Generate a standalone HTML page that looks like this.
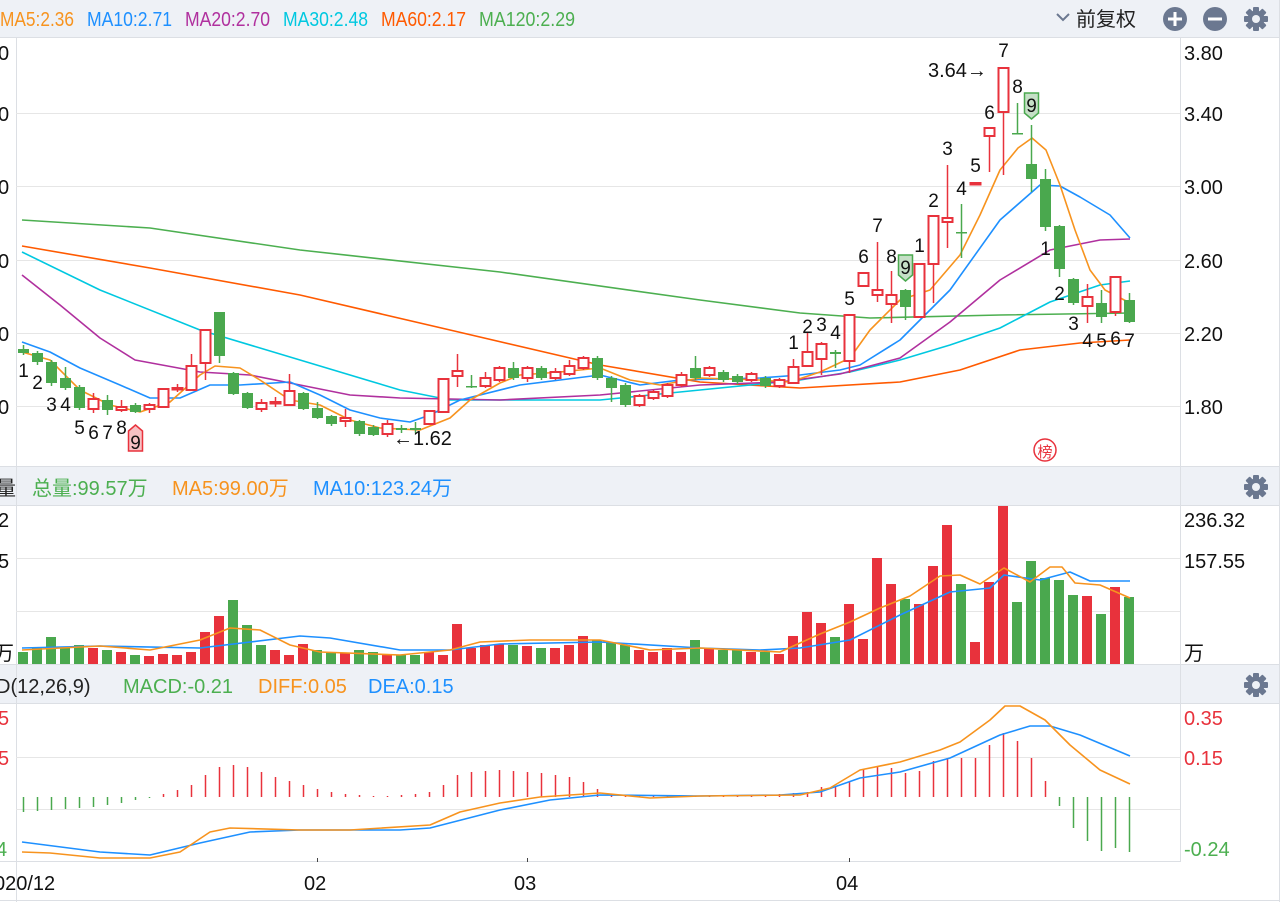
<!DOCTYPE html>
<html><head><meta charset="utf-8">
<style>
html,body{margin:0;padding:0;background:#fff;width:1286px;height:902px;overflow:hidden}
svg{display:block}
text{font-family:"Liberation Sans","Noto Sans CJK SC",sans-serif}
</style></head>
<body>
<svg id="s" width="1286" height="902" viewBox="0 0 1286 902" xmlns="http://www.w3.org/2000/svg">
<rect x="0" y="0" width="1286" height="902" fill="#fff"/>
<line x1="1279.5" y1="0" x2="1279.5" y2="902" stroke="#dcdfe4"/>
<rect x="0" y="0" width="1279" height="37" fill="#eef1f6"/>
<line x1="0" y1="37.5" x2="1279" y2="37.5" stroke="#dcdfe4"/>
<rect x="0" y="467" width="1279" height="38" fill="#eef1f6"/>
<line x1="0" y1="466.5" x2="1279" y2="466.5" stroke="#dcdfe4"/>
<line x1="0" y1="505.5" x2="1279" y2="505.5" stroke="#dcdfe4"/>
<rect x="0" y="665" width="1279" height="38" fill="#eef1f6"/>
<line x1="0" y1="664.5" x2="1279" y2="664.5" stroke="#dcdfe4"/>
<line x1="0" y1="703.5" x2="1279" y2="703.5" stroke="#dcdfe4"/>
<line x1="0" y1="861.5" x2="1180" y2="861.5" stroke="#dcdfe4"/>
<line x1="0" y1="900.5" x2="1279" y2="900.5" stroke="#dcdfe4"/>
<line x1="16.5" y1="38" x2="16.5" y2="902" stroke="#dcdfe4"/>
<line x1="1180.5" y1="38" x2="1180.5" y2="862" stroke="#dcdfe4"/>
<g id="grid" stroke="#e6e6e6" stroke-width="1">
<line x1="16" y1="113.5" x2="1180" y2="113.5"/><line x1="16" y1="186.5" x2="1180" y2="186.5"/>
<line x1="16" y1="260.5" x2="1180" y2="260.5"/><line x1="16" y1="333.5" x2="1180" y2="333.5"/>
<line x1="16" y1="406.5" x2="1180" y2="406.5"/>
<line x1="16" y1="558.5" x2="1180" y2="558.5"/><line x1="16" y1="611.5" x2="1180" y2="611.5"/>
<line x1="16" y1="757.5" x2="1180" y2="757.5"/><line x1="16" y1="809.5" x2="1180" y2="809.5"/>
</g>
<g font-size="20">
<text x="0" y="26" fill="#f7931e" textLength="74" lengthAdjust="spacingAndGlyphs">MA5:2.36</text>
<text x="87" y="26" fill="#1e90ff" textLength="85" lengthAdjust="spacingAndGlyphs">MA10:2.71</text>
<text x="185" y="26" fill="#b0309e" textLength="85" lengthAdjust="spacingAndGlyphs">MA20:2.70</text>
<text x="283" y="26" fill="#00c8e0" textLength="85" lengthAdjust="spacingAndGlyphs">MA30:2.48</text>
<text x="381" y="26" fill="#ff5a00" textLength="85" lengthAdjust="spacingAndGlyphs">MA60:2.17</text>
<text x="479" y="26" fill="#4caf50" textLength="96" lengthAdjust="spacingAndGlyphs">MA120:2.29</text>
<text x="1076" y="26" fill="#222">前复权</text>
<path d="M1057 14 l6 6 l6 -6" fill="none" stroke="#6b7890" stroke-width="2"/>
<text x="-4" y="495" fill="#222">量</text>
<text x="32" y="495" fill="#4caf50">总量:99.57万</text>
<text x="172" y="495" fill="#f7931e">MA5:99.00万</text>
<text x="313" y="495" fill="#1e90ff">MA10:123.24万</text>
<text x="-4" y="693" fill="#222">D(12,26,9)</text>
<text x="123" y="693" fill="#4caf50">MACD:-0.21</text>
<text x="258" y="693" fill="#f7931e">DIFF:0.05</text>
<text x="368" y="693" fill="#1e90ff">DEA:0.15</text>
<g fill="#111">
<text x="1184" y="60">3.80</text><text x="1184" y="121">3.40</text><text x="1184" y="194">3.00</text>
<text x="1184" y="268">2.60</text><text x="1184" y="341">2.20</text><text x="1184" y="414">1.80</text>
<text x="1184" y="527">236.32</text><text x="1184" y="568">157.55</text><text x="1184" y="660">万</text>
<text x="-2" y="60">0</text><text x="-2" y="121">0</text><text x="-2" y="194">0</text>
<text x="-2" y="268">0</text><text x="-2" y="341">0</text><text x="-2" y="414">0</text>
<text x="-2" y="527">2</text><text x="-2" y="568">5</text><text x="-6" y="660">万</text>
<text x="-6" y="890">020/12</text><text x="304" y="890">02</text><text x="514" y="890">03</text><text x="836" y="890">04</text>
</g>
<text x="1184" y="725" fill="#e8323c">0.35</text><text x="1184" y="765" fill="#e8323c">0.15</text>
<text x="1184" y="856" fill="#4caf50">-0.24</text>
<text x="-2" y="725" fill="#e8323c">5</text><text x="-2" y="765" fill="#e8323c">5</text><text x="-4" y="856" fill="#4caf50">4</text>
</g>
<g stroke="#444"><line x1="317.5" y1="858" x2="317.5" y2="862"/><line x1="527.5" y1="858" x2="527.5" y2="862"/><line x1="849.5" y1="858" x2="849.5" y2="862"/></g>
<circle cx="1175" cy="19" r="12" fill="#6b7890"/><path d="M1168 19h14M1175 12v14" stroke="#fff" stroke-width="3"/>
<circle cx="1215" cy="19" r="12" fill="#6b7890"/><path d="M1208 19h14" stroke="#fff" stroke-width="3"/>
<g id="gear"><g transform="translate(1256,19)" fill="#6b7890">
<circle r="8.5"/>
<g><rect x="-3" y="-12" width="6" height="24" rx="1"/><rect x="-3" y="-12" width="6" height="24" rx="1" transform="rotate(45)"/><rect x="-3" y="-12" width="6" height="24" rx="1" transform="rotate(90)"/><rect x="-3" y="-12" width="6" height="24" rx="1" transform="rotate(135)"/></g>
<circle r="4" fill="#eef1f6"/></g></g>
<use href="#gear" y="468"/><use href="#gear" y="666"/>
<g id="dyn"></g>
<circle cx="1045" cy="450" r="11" fill="none" stroke="#e8323c" stroke-width="1.5"/>
<text x="1045" y="457" font-size="15" fill="#e8323c" text-anchor="middle">榜</text>
</svg>
<script>
var NS="http://www.w3.org/2000/svg",g=document.getElementById('dyn');
function el(t,a,txt){var e=document.createElementNS(NS,t);for(var k in a)e.setAttribute(k,a[k]);if(txt!=null)e.textContent=txt;g.appendChild(e);return e;}
function X(i){return 23+14*i;}
var R="#e8323c",G="#4aa84e";
var vol=[[652,0],[648,0],[637,0],[648,0],[645,0],[648,1],[650,0],[652,1],[655,0],[656,1],[654,1],[655,1],[652,1],[632,1],[616,1],[600,0],[625,0],[645,0],[650,1],[655,1],[644,1],[650,0],[653,0],[653,1],[650,0],[652,0],[655,1],[655,0],[655,0],[652,1],[655,1],[624,1],[648,1],[645,1],[644,1],[645,0],[646,1],[648,0],[648,1],[645,1],[636,1],[640,0],[643,0],[645,0],[650,1],[652,1],[648,1],[652,1],[640,0],[648,1],[650,0],[650,0],[652,1],[652,0],[654,1],[636,1],[612,1],[623,1],[637,0],[604,1],[639,1],[558,1],[584,1],[599,0],[604,1],[566,1],[525,1],[584,0],[642,1],[582,1],[506,1],[602,0],[561,0],[578,0],[580,0],[595,0],[596,1],[614,0],[587,1],[597,0]];
vol.forEach(function(v,i){el('rect',{x:X(i)-5,y:v[0],width:10,height:664-v[0],fill:v[1]?R:G});});
function pl(pts,c,w){el('polyline',{points:pts,fill:'none',stroke:c,'stroke-width':w||1.6,'stroke-linejoin':'round'});}
pl("22,648 100,646 200,648 300,636 330,638 400,650 450,650 500,644 600,642 700,648 760,650 800,648 850,640 900,615 950,592 990,588 1004,575 1040,580 1070,572 1090,581 1130,581","#1e90ff");
pl("22,650 100,646 150,650 200,640 230,628 260,630 290,645 320,652 400,655 450,650 480,642 530,640 600,640 650,650 700,648 780,652 820,634 850,622 880,608 910,596 940,576 960,575 980,584 1004,568 1030,582 1050,567 1062,567 1075,583 1100,585 1130,598","#f7931e");
var mh=[15,14,13,12,11,10,8,6,3,1,-3,-7,-12,-22,-30,-32,-30,-25,-20,-16,-12,-8,-5,-3,-2,-1,-1,-2,-3,-5,-12,-22,-25,-26,-27,-26,-25,-24,-22,-20,-15,-8,-3,-2,-1,-1,-1,-1,-1,-1,-1,-1,-1,-1,-3,-4,-5,-10,-10,-15,-28,-31,-29,-24,-26,-36,-39,-39,-39,-52,-64,-56,-39,-16,9,31,44,54,51,55];
mh.forEach(function(v,i){el('line',{x1:X(i)+.5,x2:X(i)+.5,y1:797,y2:797+v,stroke:v>0?G:R,'stroke-width':1.5});});
pl("22,842 100,852 150,855 200,843 250,832 300,830 400,830 430,828 500,810 550,800 600,795 700,796 780,795 820,792 860,778 900,772 950,758 1000,735 1030,726 1050,726 1080,735 1130,756","#1e90ff");
pl("22,852 50,853 100,858 150,858 180,852 210,832 230,828 300,830 350,830 430,825 460,812 500,803 540,797 600,793 650,798 700,796 800,795 830,788 860,770 900,762 940,750 960,742 990,720 1005,706 1020,706 1045,720 1070,745 1100,770 1130,784","#f7931e");
pl("22,220 150,228 300,250 500,272 700,300 800,313 870,318 1000,315 1130,313","#4caf50");
pl("22,246 150,268 300,295 450,330 600,365 700,382 800,388 900,382 960,370 1020,350 1080,343 1130,340","#ff5a00");
pl("22,252 100,290 200,330 300,360 400,390 450,400 600,400 700,390 800,380 850,372 900,360 950,345 1000,328 1050,302 1100,285 1130,281","#00c8e0");
pl("22,275 60,305 100,338 135,360 200,372 250,375 300,385 350,395 400,398 500,400 600,395 700,385 780,382 840,374 900,358 950,322 1000,280 1050,250 1100,240 1130,239","#b0309e");
pl("22,342 50,352 80,368 120,385 150,398 180,398 210,385 240,385 290,382 320,395 350,410 380,418 410,422 430,415 460,400 520,385 560,380 600,375 640,385 680,380 760,378 800,375 840,370 860,365 900,340 950,290 1000,220 1040,185 1060,186 1080,197 1110,215 1130,238","#1e90ff");
pl("22,352 50,360 80,390 110,405 140,412 170,402 200,375 215,366 240,368 260,380 290,400 320,405 350,420 380,428 420,430 450,418 470,400 500,383 520,375 560,372 600,368 630,380 660,385 700,378 760,380 790,382 820,372 850,358 870,330 900,300 930,290 960,255 980,215 1000,170 1018,148 1032,138 1046,150 1060,185 1075,230 1090,270 1105,290 1130,303","#f7931e");
var c=[[0,349,353,345,355],[0,353,362,351,365],[0,362,383,360,386],[0,378,388,367,390],[0,387,408,385,410],[1,399,409,393,413],[0,400,410,395,415],[1,407,410,400,412],[0,405,412,403,413],[1,405,409,403,413],[1,389,407,388,408],[1,388,389,384,392],[1,366,390,354,391],[1,330,363,329,380],[0,312,356,312,363],[0,373,394,372,395],[0,393,408,392,409],[1,403,409,399,412],[1,402,403,397,407],[1,391,405,374,406],[0,393,409,392,410],[0,408,418,402,419],[0,416,424,415,426],[1,418,421,409,427],[0,421,434,420,436],[0,427,435,425,436],[1,424,434,420,437],[0,428,430,425,433],[0,428,430,422,433],[1,411,424,410,425],[1,379,412,378,413],[1,371,376,354,387],[0,386,387,375,388],[1,378,386,372,388],[1,368,380,366,382],[0,368,378,362,380],[1,368,378,366,382],[0,368,378,366,380],[1,372,378,368,380],[1,366,374,360,376],[1,358,368,356,370],[0,358,378,356,380],[0,378,388,376,402],[0,385,405,383,407],[1,396,405,394,407],[1,392,398,390,400],[1,385,396,383,398],[1,375,385,372,387],[0,368,378,356,380],[1,368,375,366,377],[0,372,380,370,382],[0,376,382,374,384],[1,374,380,372,382],[0,378,386,376,388],[1,380,386,378,388],[1,367,383,359,384],[1,352,366,332,367],[1,344,359,342,375],[0,352,354,350,368],[1,315,361,315,373],[1,273,286,273,287],[1,290,295,242,302],[1,295,304,271,323],[0,290,307,289,320],[1,264,317,264,318],[1,216,264,215,303],[1,218,222,165,248],[0,232,233,204,258],[1,183,184,183,184],[1,128,136,128,172],[1,68,112,67,175],[0,133,134,103,134],[0,164,179,125,192],[0,179,227,169,231],[0,226,269,225,277],[0,279,303,278,305],[1,297,306,284,323],[0,303,317,290,323],[1,277,312,276,316],[0,300,322,293,323]];
c.forEach(function(d,i){var x=X(i),col=d[0]?R:G;
 el('line',{x1:x+.5,x2:x+.5,y1:d[3],y2:d[4],stroke:col,'stroke-width':1.5});
 var h=Math.max(d[2]-d[1],1.5);
 if(d[0]){el('rect',{x:x-4.5,y:d[1],width:10,height:h,fill:'#fff',stroke:col,'stroke-width':2});}
 else el('rect',{x:x-5,y:d[1],width:11,height:h,fill:col});});
var L=[[0,"1",377],[1,"2",389],[2,"3",411],[3,"4",411],[4,"5",434],[5,"6",439],[6,"7",439],[7,"8",434],
[55,"1",349],[56,"2",333],[57,"3",331],[58,"4",339],[59,"5",305],[60,"6",263],[61,"7",232],[62,"8",263],[64,"1",252],[65,"2",207],[66,"3",155],[67,"4",195],[68,"5",172],[69,"6",119],[70,"7",57],[71,"8",93],
[73,"1",255],[74,"2",300],[75,"3",330],[76,"4",347],[77,"5",347],[78,"6",345],[79,"7",347]];
L.forEach(function(l){el('text',{x:X(l[0])+.5,y:l[2],'font-size':19,'text-anchor':'middle',fill:'#111'},l[1]);});
function badge(i,y,fill,st){var x=X(i)+.5;el('path',{d:"M"+(x-7)+" "+y+"h14v20l-7 6l-7-6z",fill:fill,stroke:st,'stroke-width':1.5});el('text',{x:x,y:y+19,'font-size':19,'text-anchor':'middle',fill:'#111'},"9");}
(function(){var x=X(8)+.5,y=425;el('path',{d:"M"+(x-7)+" "+(y+6)+"l7-6l7 6v20h-14z",fill:'#f7c1c4',stroke:R,'stroke-width':1.5});el('text',{x:x,y:y+24,'font-size':19,'text-anchor':'middle',fill:'#111'},"9");})();
badge(63,255,'#c5dfc6',G);badge(72,93,'#c5dfc6',G);
el('text',{x:393,y:445,'font-size':20,fill:'#111'},"←1.62");
el('text',{x:928,y:77,'font-size':20,fill:'#111'},"3.64→");
</script>
</body></html>
